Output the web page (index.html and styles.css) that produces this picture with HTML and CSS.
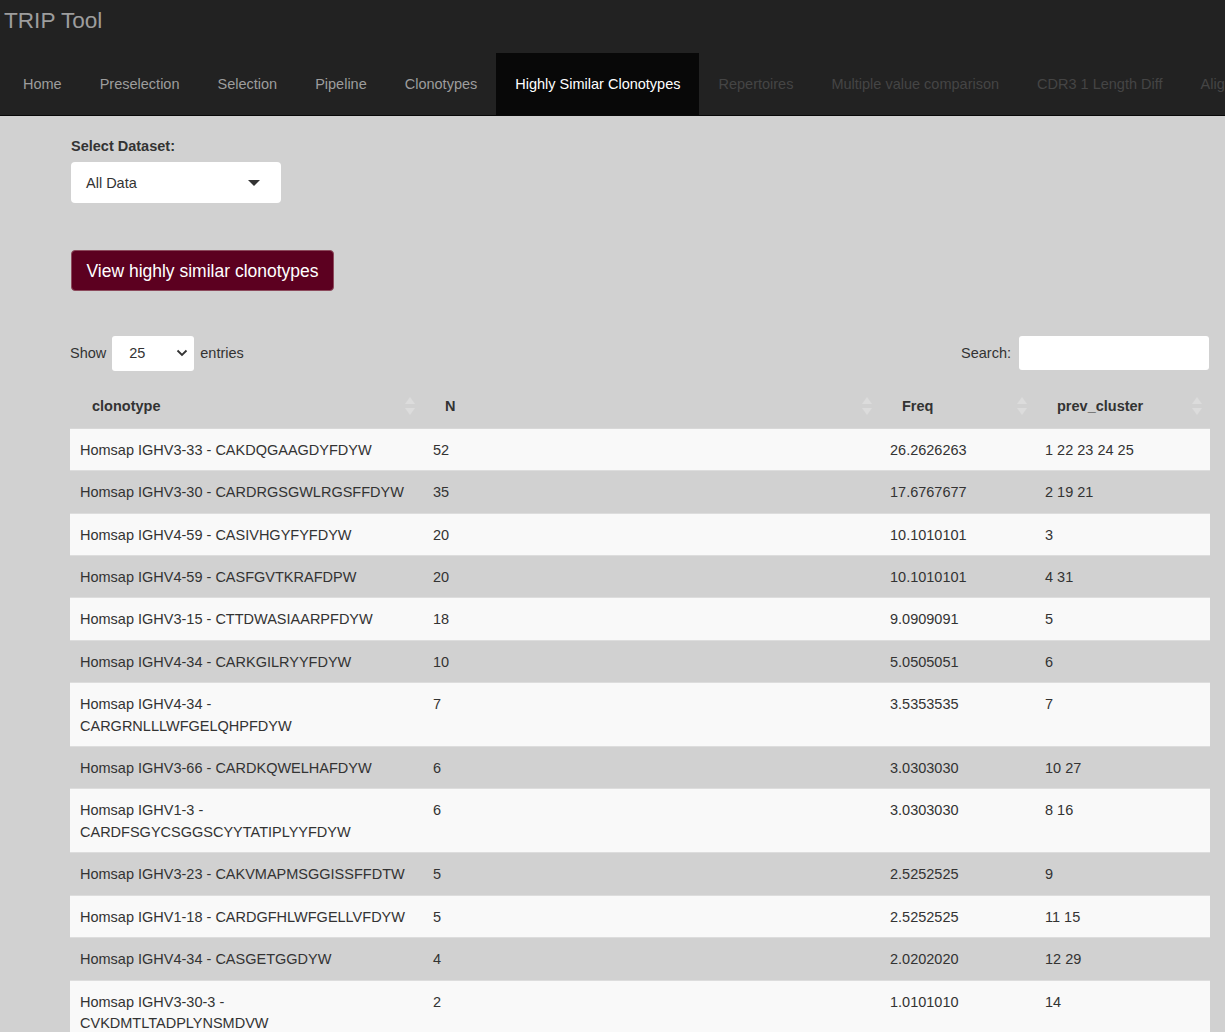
FILE: index.html
```html
<!DOCTYPE html>
<html lang="en">
<head>
<meta charset="utf-8">
<title>TRIP Tool</title>
<link rel="stylesheet" href="styles.css">
</head>
<body>
<header class="topbar">
  <div class="brand">TRIP Tool</div>
  <nav class="nav">
    <a class="nav-item">Home</a>
    <a class="nav-item">Preselection</a>
    <a class="nav-item">Selection</a>
    <a class="nav-item">Pipeline</a>
    <a class="nav-item">Clonotypes</a>
    <a class="nav-item active">Highly Similar Clonotypes</a>
    <a class="nav-item disabled">Repertoires</a>
    <a class="nav-item disabled">Multiple value comparison</a>
    <a class="nav-item disabled">CDR3 1 Length Diff</a>
    <a class="nav-item disabled">Alignment</a>
  </nav>
</header>
<main class="content">
  <label class="field-label">Select Dataset:</label>
  <div class="dropdown">
    <span>All Data</span>
    <span class="caret"></span>
  </div>
  <button class="btn-view">View highly similar clonotypes</button>

  <div class="dt-controls">
    <div class="dt-length">
      <span>Show</span>
      <div class="len-select">
        <span>25</span>
        <svg class="chev" width="12" height="8" viewBox="0 0 12 8"><path d="M1.5 1.5 L6 6 L10.5 1.5" fill="none" stroke="#333" stroke-width="1.8"/></svg>
      </div>
      <span>entries</span>
    </div>
    <div class="dt-search">
      <span>Search:</span>
      <div class="search-input"></div>
    </div>
  </div>

  <table class="dt">
    <colgroup>
      <col class="c1"><col class="c2"><col class="c3"><col class="c4">
    </colgroup>
    <thead>
      <tr>
        <th>clonotype<span class="sort"></span></th>
        <th>N<span class="sort"></span></th>
        <th>Freq<span class="sort"></span></th>
        <th>prev_cluster<span class="sort"></span></th>
      </tr>
    </thead>
    <tbody>
      <tr><td>Homsap IGHV3-33 - CAKDQGAAGDYFDYW</td><td>52</td><td>26.2626263</td><td>1 22 23 24 25</td></tr>
      <tr><td>Homsap IGHV3-30 - CARDRGSGWLRGSFFDYW</td><td>35</td><td>17.6767677</td><td>2 19 21</td></tr>
      <tr><td>Homsap IGHV4-59 - CASIVHGYFYFDYW</td><td>20</td><td>10.1010101</td><td>3</td></tr>
      <tr><td>Homsap IGHV4-59 - CASFGVTKRAFDPW</td><td>20</td><td>10.1010101</td><td>4 31</td></tr>
      <tr><td>Homsap IGHV3-15 - CTTDWASIAARPFDYW</td><td>18</td><td>9.0909091</td><td>5</td></tr>
      <tr><td>Homsap IGHV4-34 - CARKGILRYYFDYW</td><td>10</td><td>5.0505051</td><td>6</td></tr>
      <tr><td>Homsap IGHV4-34 - CARGRNLLLWFGELQHPFDYW</td><td>7</td><td>3.5353535</td><td>7</td></tr>
      <tr><td>Homsap IGHV3-66 - CARDKQWELHAFDYW</td><td>6</td><td>3.0303030</td><td>10 27</td></tr>
      <tr><td>Homsap IGHV1-3 - CARDFSGYCSGGSCYYTATIPLYYFDYW</td><td>6</td><td>3.0303030</td><td>8 16</td></tr>
      <tr><td>Homsap IGHV3-23 - CAKVMAPMSGGISSFFDTW</td><td>5</td><td>2.5252525</td><td>9</td></tr>
      <tr><td>Homsap IGHV1-18 - CARDGFHLWFGELLVFDYW</td><td>5</td><td>2.5252525</td><td>11 15</td></tr>
      <tr><td>Homsap IGHV4-34 - CASGETGGDYW</td><td>4</td><td>2.0202020</td><td>12 29</td></tr>
      <tr><td>Homsap IGHV3-30-3 - CVKDMTLTADPLYNSMDVW</td><td>2</td><td>1.0101010</td><td>14</td></tr>
    </tbody>
  </table>
</main>
</body>
</html>
```

FILE: styles.css
```css
html, body {
  margin: 0;
  padding: 0;
  height: 100%;
  overflow: hidden;
}
body {
  background: #d1d1d1;
  font-family: "Liberation Sans", Arial, sans-serif;
  font-size: 14.5px;
  line-height: 21.4px;
  color: #333;
}

.topbar {
  background: #222;
  border-bottom: 1px solid #080808;
}
.brand {
  height: 53px;
  line-height: 41px;
  padding-left: 4px;
  font-size: 22.6px;
  color: #9d9d9d;
}
.nav {
  display: flex;
  white-space: nowrap;
  overflow: hidden;
  padding-left: 4px;
  height: 62px;
}
.nav-item {
  display: block;
  padding: 0 19px;
  line-height: 62px;
  color: #9d9d9d;
  flex: none;
}
.nav-item.active {
  background: #080808;
  color: #fff;
}
.nav-item.disabled {
  color: #454545;
}

.content {
  padding: 20px 0 0 70px;
  width: 1140px;
}
.field-label {
  display: block;
  font-weight: bold;
  margin: 0 0 5px 1px;
}
.dropdown {
  margin-left: 1px;
  width: 210px;
  height: 41px;
  box-sizing: border-box;
  background: #fff;
  border-radius: 4px;
  display: flex;
  align-items: center;
  justify-content: space-between;
  padding: 1px 21px 0 15px;
}
.caret {
  width: 0;
  height: 0;
  border-left: 6px solid transparent;
  border-right: 6px solid transparent;
  border-top: 6px solid #333;
}
.btn-view {
  display: block;
  margin: 47px 0 0 1px;
  height: 41px;
  width: 263px;
  padding: 1px 0 0;
  background: #5c0020;
  color: #fff;
  border: 1px solid #8c4a5c;
  border-radius: 4px;
  font-family: "Liberation Sans", Arial, sans-serif;
  font-size: 17.5px;
  text-align: center;
}

.dt-controls {
  display: flex;
  justify-content: space-between;
  align-items: center;
  margin-top: 44px;
  height: 36px;
}
.dt-length, .dt-search {
  display: flex;
  align-items: center;
}
.len-select {
  margin: 0 6px;
  width: 82px;
  height: 35px;
  box-sizing: border-box;
  background: #fff;
  border-radius: 3px;
  display: flex;
  align-items: center;
  justify-content: space-between;
  padding: 0 6px 0 17px;
}
.chev { display: block; }
.search-input {
  margin-left: 8px;
  width: 190px;
  height: 34px;
  background: #fff;
  border-radius: 3px;
  margin-right: 1px;
}

.dt {
  margin-top: 13px;
  width: 1140px;
  border-collapse: collapse;
  table-layout: fixed;
}
.c1 { width: 353px; }
.c2 { width: 457px; }
.c3 { width: 155px; }
.c4 { width: 175px; }
.dt th {
  position: relative;
  text-align: left;
  font-weight: bold;
  padding: 12px 10px 10px 22px;
  height: 21px;
}
.sort {
  position: absolute;
  right: 8px;
  top: 50%;
  margin-top: -9px;
  width: 10px;
  height: 18px;
}
.sort::before, .sort::after {
  content: "";
  position: absolute;
  left: 0;
  border-left: 5px solid transparent;
  border-right: 5px solid transparent;
}
.sort::before {
  top: 0;
  border-bottom: 7px solid #dcdcdc;
}
.sort::after {
  bottom: 0;
  border-top: 7px solid #dcdcdc;
}
.dt td {
  padding: 11px 10px 9px;
  vertical-align: top;
  border-top: 1px solid #dddddd;
}
.dt tbody tr:nth-child(odd) td {
  background: #f9f9f9;
}
.dt tbody tr:first-child td {
  border-top: 1px solid #d8d8d8;
}
```
